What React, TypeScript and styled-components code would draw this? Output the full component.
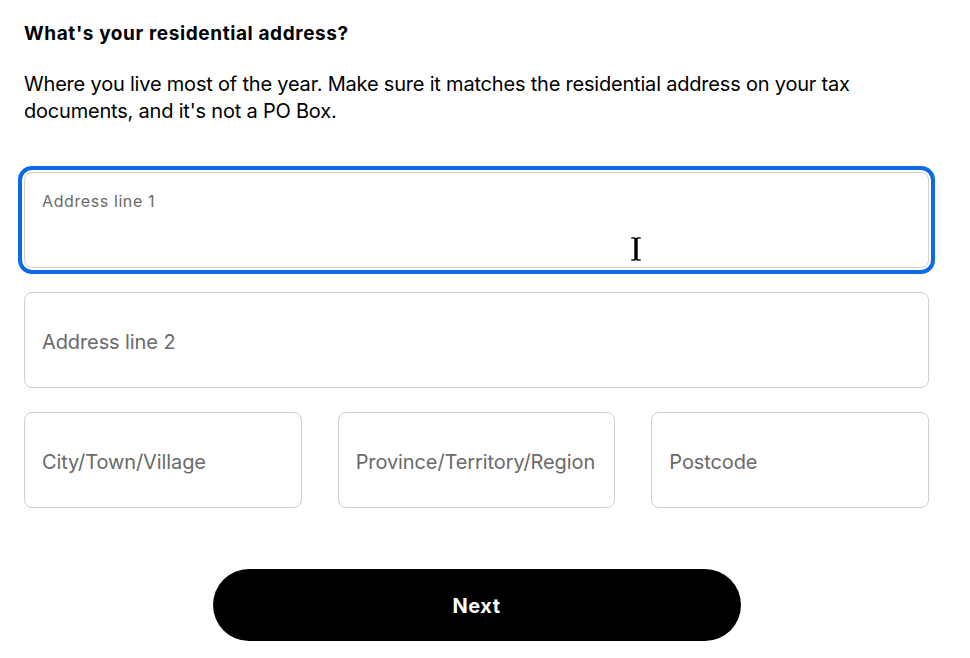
import styled, { createGlobalStyle } from "styled-components";

const GlobalStyle = createGlobalStyle`
  html, body {
    margin: 0;
    padding: 0;
    background: #ffffff;
  }
  body {
    font-family: Inter, "Liberation Sans", Arial, sans-serif;
    color: #000000;
  }
`;

const Page = styled.div`
  position: relative;
  width: 905px;
  padding: 22px 24px 0 24px;
`;

const Heading = styled.h1`
  margin: 0;
  font-size: 19px;
  line-height: 24px;
  font-weight: 700;
  letter-spacing: 0.6px;
`;

const Intro = styled.p`
  margin: 25px 0 0 0;
  font-size: 20px;
  line-height: 27px;
  font-weight: 400;
  letter-spacing: -0.2px;
`;

const Form = styled.div`
  margin-top: 47px;
  display: flex;
  flex-direction: column;
  gap: 24px;
`;

const Row = styled.div`
  display: grid;
  grid-template-columns: repeat(3, 1fr);
  gap: 36px;
`;

const Field = styled.label<{ $focused?: boolean }>`
  box-sizing: border-box;
  height: 96px;
  display: flex;
  flex-direction: column;
  justify-content: ${(p) => (p.$focused ? "flex-start" : "center")};
  padding: ${(p) => (p.$focused ? "18px 17px" : "4px 17px 0 17px")};
  border: 1px solid #cfcfcf;
  border-radius: 8px;
  background: #ffffff;
  box-shadow: ${(p) =>
    p.$focused ? "0 0 0 2px #ffffff, 0 0 0 6px #0b6be6" : "none"};
`;

const FloatLabel = styled.span`
  font-size: 16px;
  line-height: 20px;
  color: #6a6a6a;
  letter-spacing: 0.6px;
`;

const Placeholder = styled.span`
  font-size: 20px;
  line-height: 24px;
  color: #6a6a6a;
  letter-spacing: -0.1px;
  white-space: nowrap;
`;

const Actions = styled.div`
  margin-top: 61px;
  display: flex;
  justify-content: center;
`;

const NextButton = styled.button`
  width: 528px;
  height: 72px;
  padding-top: 2px;
  border: none;
  border-radius: 36px;
  background: #000000;
  color: #ffffff;
  font-family: Inter, "Liberation Sans", Arial, sans-serif;
  font-size: 20px;
  font-weight: 700;
  letter-spacing: 0.5px;
  cursor: pointer;
`;

const Cursor = styled.svg`
  position: absolute;
  left: 630px;
  top: 236px;
  pointer-events: none;
`;

const IBeam = () => (
  <Cursor width="12" height="26" viewBox="0 0 12 26">
    <path
      d="M1 1h4l1 1 1-1h4v2H8v20h3v2H7l-1-1-1 1H1v-2h3V3H1z"
      fill="#000000"
      stroke="#ffffff"
      strokeWidth="0.6"
    />
  </Cursor>
);

export default function App() {
  return (
    <>
      <GlobalStyle />
      <Page>
        <Heading>What's your residential address?</Heading>
        <Intro>
          Where you live most of the year. Make sure it matches the residential address on your tax
          documents, and it's not a PO Box.
        </Intro>
        <Form>
          <Field $focused>
            <FloatLabel>Address line 1</FloatLabel>
          </Field>
          <Field>
            <Placeholder>Address line 2</Placeholder>
          </Field>
          <Row>
            <Field>
              <Placeholder>City/Town/Village</Placeholder>
            </Field>
            <Field>
              <Placeholder>Province/Territory/Region</Placeholder>
            </Field>
            <Field>
              <Placeholder>Postcode</Placeholder>
            </Field>
          </Row>
        </Form>
        <Actions>
          <NextButton>Next</NextButton>
        </Actions>
        <IBeam />
      </Page>
    </>
  );
}
